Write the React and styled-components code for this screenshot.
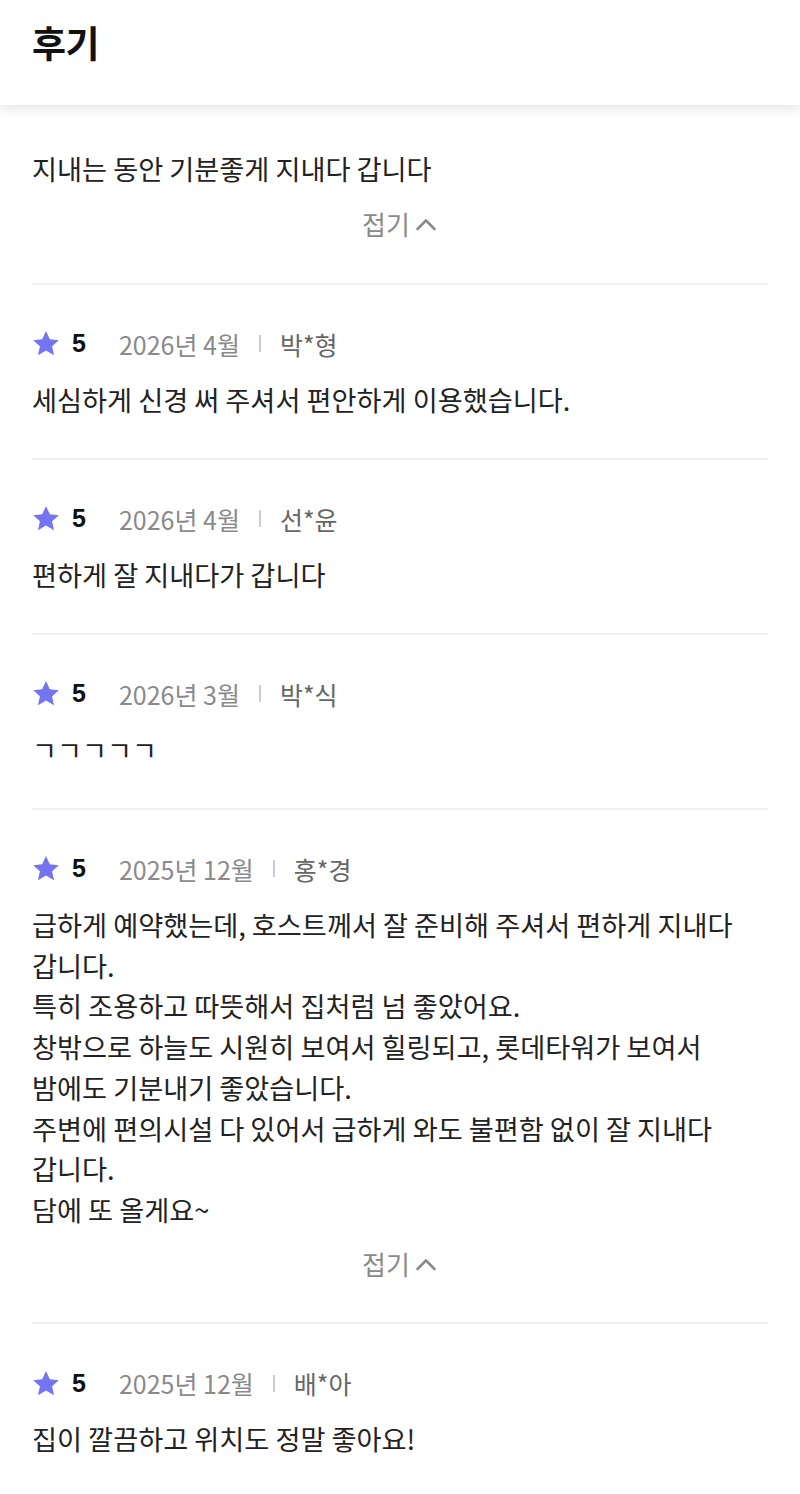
import React from "react";
import styled, { createGlobalStyle } from "styled-components";

const GlobalStyle = createGlobalStyle`
  html, body {
    margin: 0;
    padding: 0;
    background: #fff;
  }
  body {
    font-family: "Noto Sans CJK KR", "Noto Sans", sans-serif;
    color: #222;
    -webkit-font-smoothing: antialiased;
  }
`;

const Page = styled.div`
  width: 800px;
  height: 1494px;
  overflow: hidden;
  background: #fff;
`;

const Header = styled.header`
  position: relative;
  z-index: 2;
  height: 105px;
  padding: 0 32px;
  display: flex;
  align-items: flex-start;
  background: #fff;
  box-shadow: 0 3px 12px rgba(0, 0, 0, 0.12);
`;

const Title = styled.h1`
  margin: 17px 0 0;
  font-size: 37px;
  line-height: 50px;
  font-weight: 700;
  color: #111;
  letter-spacing: -0.5px;
`;

const List = styled.div`
  padding: 0 32px;
`;

const Review = styled.section`
  padding: 43px 0 ${(p) => (p.$first ? "39px" : "38.4px")};
  border-bottom: ${(p) => (p.$last ? "none" : "2px solid #f0f0f0")};
`;

const Meta = styled.div`
  display: flex;
  align-items: center;
  height: 32px;
  margin-bottom: 19px;
`;

const Score = styled.span`
  display: flex;
  align-items: center;
  gap: 12px;
  font-family: "Liberation Sans", Arial, sans-serif;
  font-size: 25px;
  font-weight: 700;
  color: #111;
  margin-right: 33px;
`;

const MetaText = styled.span`
  font-size: 25px;
  color: ${(p) => p.$color || "#8a8a8a"};
`;

const Sep = styled.span`
  width: 2px;
  height: 17px;
  background: #cacadb;
  margin: 0 19px 0 19px;
`;

const Body = styled.p`
  margin: 0;
  font-size: 27.2px;
  line-height: 40.7px;
  color: #222;
  white-space: pre-line;
  word-break: keep-all;
`;

const Fold = styled.button`
  display: flex;
  align-items: center;
  justify-content: center;
  gap: 4px;
  width: 100%;
  height: 40px;
  margin-top: ${(p) => (p.$tight ? "14px" : "15px")};
  padding: 0;
  border: none;
  background: none;
  font-family: inherit;
  font-size: 26px;
  color: #8a8a8a;
  cursor: pointer;
`;

const Star = () => (
  <svg width="28" height="27" viewBox="0 0 24 23">
    <path
      d="M12 0.8l3.3 7.1 7.7.8-5.8 5.2 1.7 7.6L12 17.6l-6.9 3.9 1.7-7.6L1 8.7l7.7-.8z"
      fill="#7474f0"
    />
  </svg>
);

const Chevron = () => (
  <svg width="24" height="24" viewBox="0 0 24 24">
    <path
      d="M3.5 17l8.5-8.5 8.5 8.5"
      fill="none"
      stroke="#8a8a8a"
      strokeWidth="2.6"
      strokeLinecap="round"
      strokeLinejoin="round"
    />
  </svg>
);

const reviews = [
  {
    date: "2026년 4월",
    name: "박*형",
    text: "세심하게 신경 써 주셔서 편안하게 이용했습니다.",
  },
  { date: "2026년 4월", name: "선*윤", text: "편하게 잘 지내다가 갑니다" },
  { date: "2026년 3월", name: "박*식", text: "ㄱㄱㄱㄱㄱ" },
  {
    date: "2025년 12월",
    name: "홍*경",
    text:
      "급하게 예약했는데, 호스트께서 잘 준비해 주셔서 편하게 지내다 갑니다.\n특히 조용하고 따뜻해서 집처럼 넘 좋았어요.\n창밖으로 하늘도 시원히 보여서 힐링되고, 롯데타워가 보여서 밤에도 기분내기 좋았습니다.\n주변에 편의시설 다 있어서 급하게 와도 불편함 없이 잘 지내다 갑니다.\n담에 또 올게요~",
    folded: true,
  },
  { date: "2025년 12월", name: "배*아", text: "집이 깔끔하고 위치도 정말 좋아요!" },
];

export default function App() {
  return (
    <Page>
      <GlobalStyle />
      <Header>
        <Title>후기</Title>
      </Header>
      <List>
        <Review $first>
          <Body>지내는 동안 기분좋게 지내다 갑니다</Body>
          <Fold>
            접기
            <Chevron />
          </Fold>
        </Review>
        {reviews.map((r, i) => (
          <Review key={i} $last={i === reviews.length - 1}>
            <Meta>
              <Score>
                <Star />5
              </Score>
              <MetaText>{r.date}</MetaText>
              <Sep />
              <MetaText $color="#666">{r.name}</MetaText>
            </Meta>
            <Body>{r.text}</Body>
            {r.folded && (
              <Fold $tight>
                접기
                <Chevron />
              </Fold>
            )}
          </Review>
        ))}
      </List>
    </Page>
  );
}
